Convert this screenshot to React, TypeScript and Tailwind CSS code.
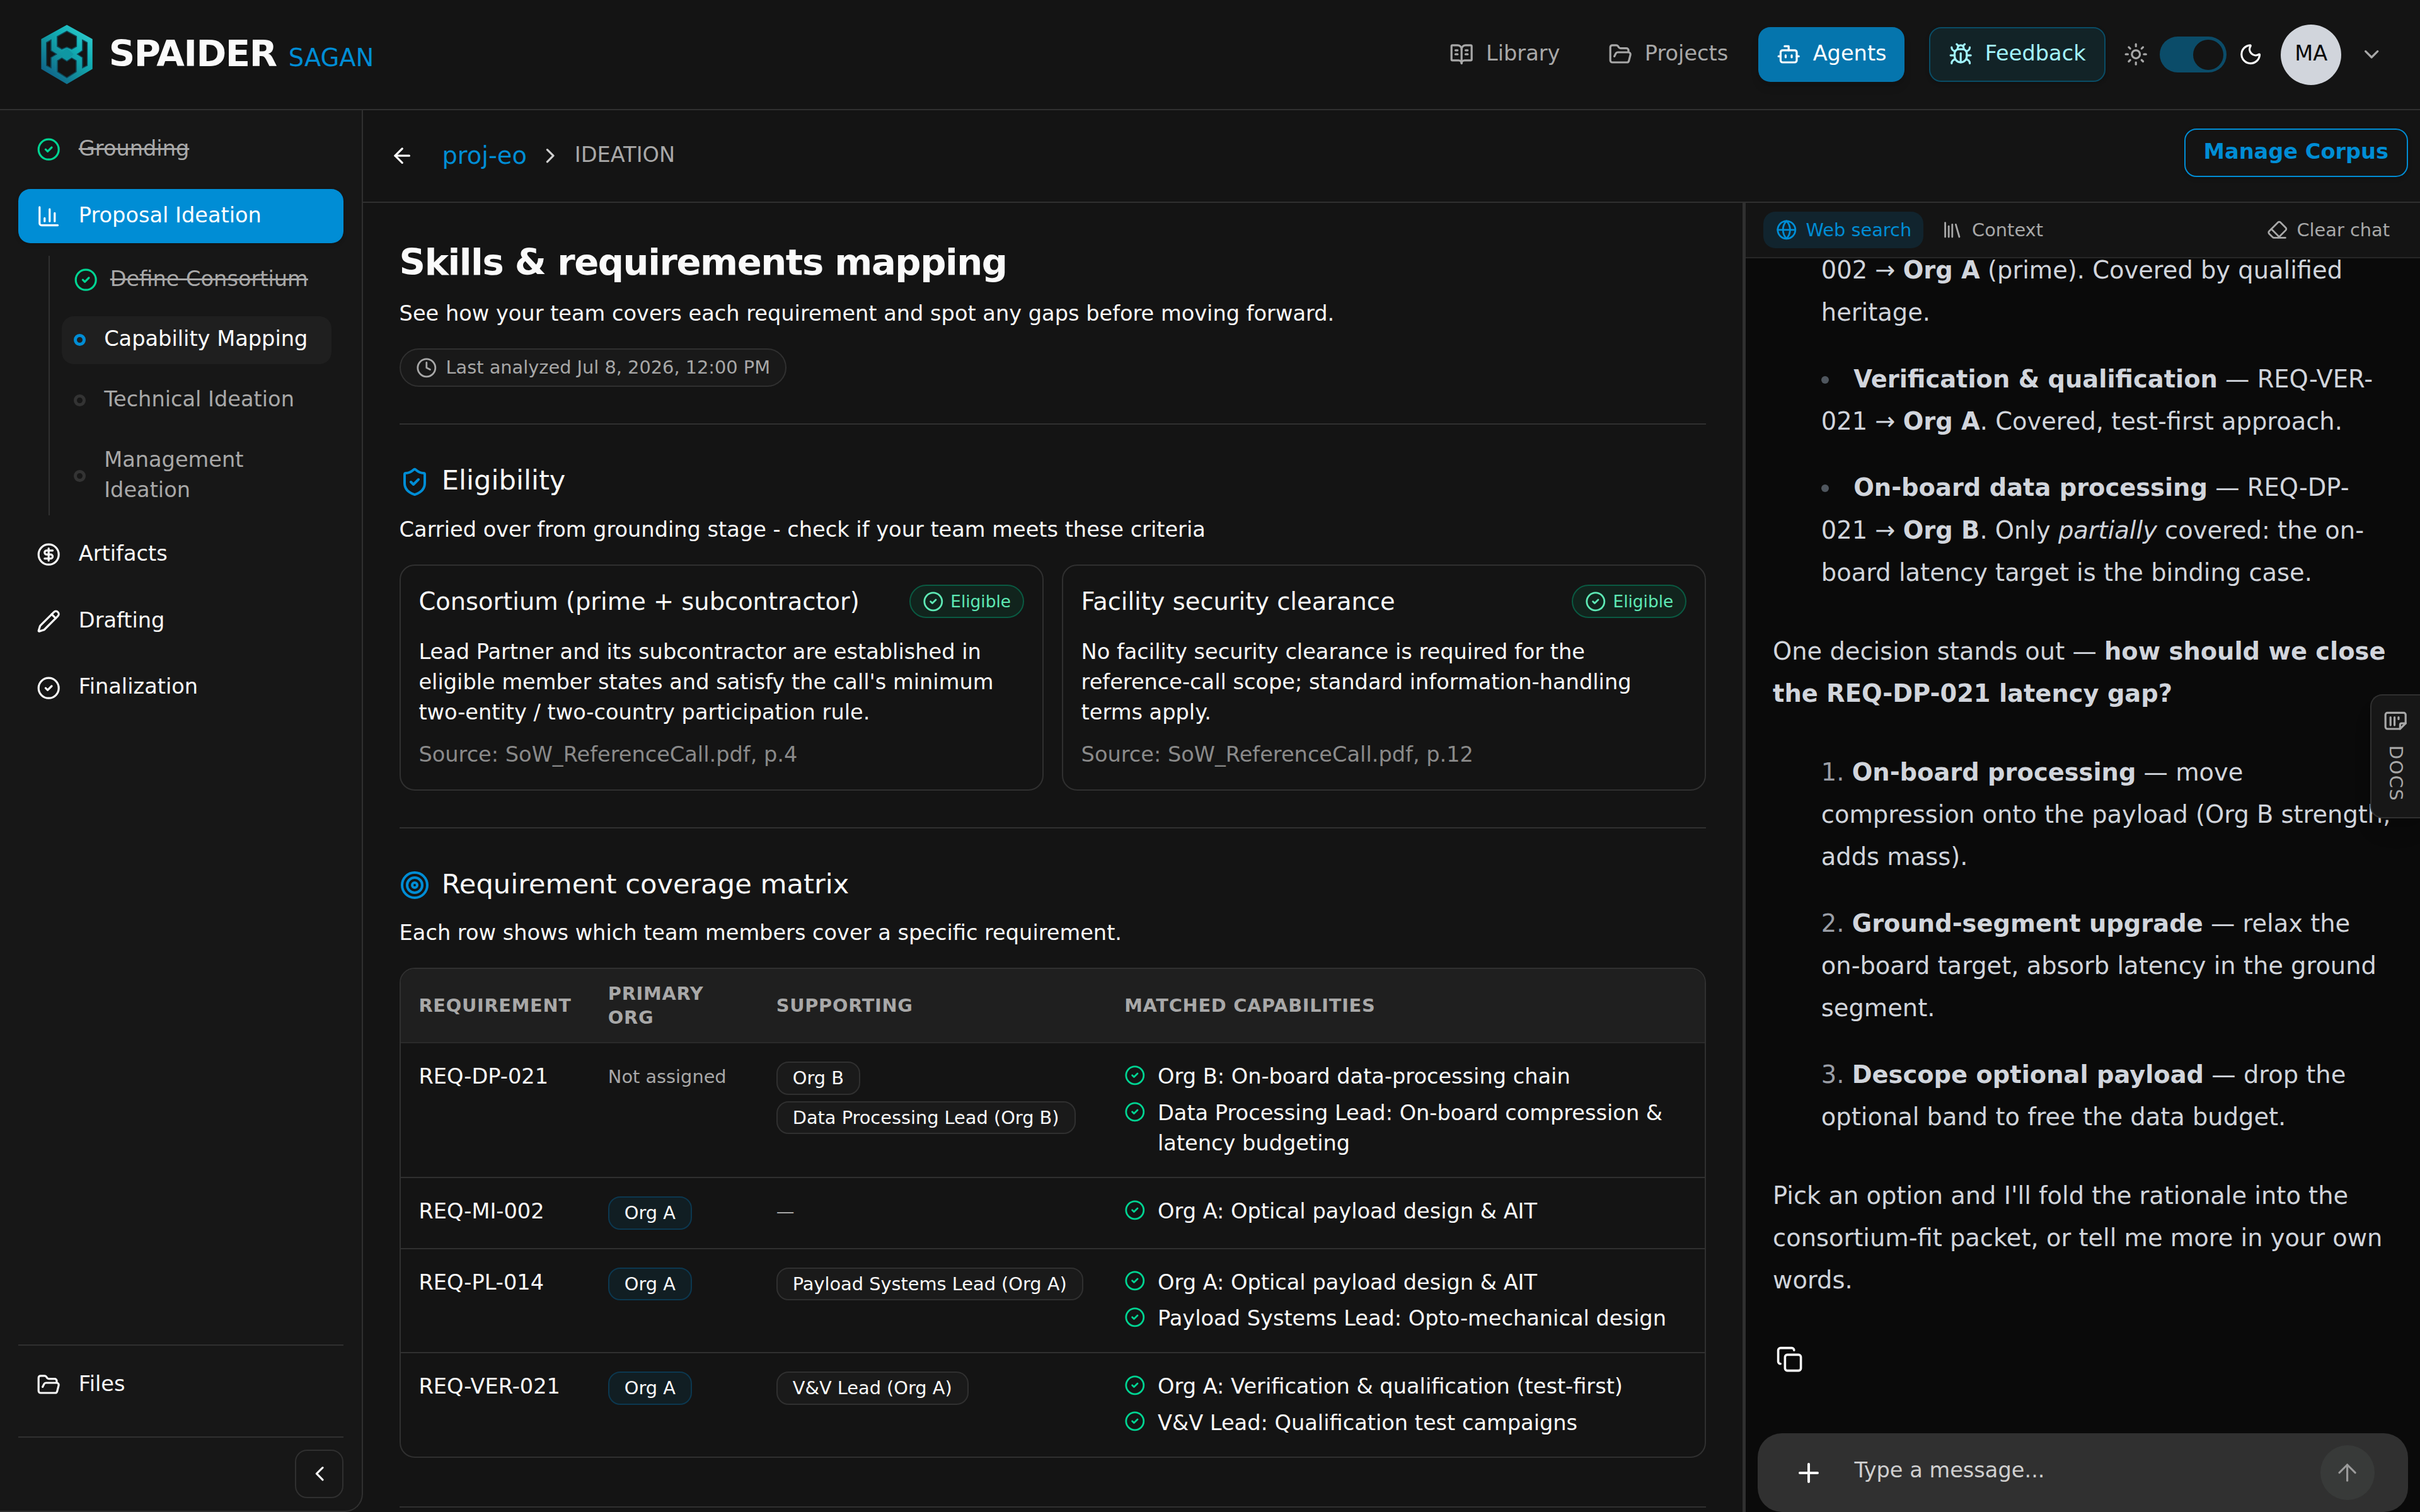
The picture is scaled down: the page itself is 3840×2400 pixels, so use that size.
import type { ReactNode } from 'react';
import {
  ArrowLeft,
  ArrowUp,
  BookOpenText,
  Bot,
  Bug,
  ChartColumn,
  ChevronDown,
  ChevronLeft,
  ChevronRight,
  CircleCheck,
  CircleDollarSign,
  Clock,
  Copy,
  Eraser,
  FolderOpen,
  Globe,
  Library,
  Moon,
  Pencil,
  Plus,
  ShieldCheck,
  Sun,
  Target,
} from 'lucide-react';

function Logo() {
  return (
    <svg viewBox="22.8 37.2 288 288" className="h-10 w-10 shrink-0">
      <defs>
        <linearGradient id="logoFill" x1="0.85" y1="0.1" x2="0.15" y2="0.95">
          <stop offset="0" stopColor="#2cc6ca" />
          <stop offset="0.3" stopColor="#12b0b6" />
          <stop offset="0.6" stopColor="#128f9c" />
          <stop offset="1" stopColor="#0f5d86" />
        </linearGradient>
      </defs>
      <path
        fill="url(#logoFill)"
        fillRule="evenodd"
        d="M167 39 289 106V249L167 321 45 249V106Z
           M167 67 120 93V142L143 156 167 146 190 156 215 142V93Z
           M167 210 143 195 121 208V263L167 292 213 263V208L190 195Z
           M68 122 93 108V160L120 178 93 195V246L68 233Z
           M266 122 240 108V160L215 178 240 195V246L266 233Z"
      />
      <path
        fill="none"
        stroke="#0d4a5c"
        strokeWidth="4"
        d="M167 69 122 94V141L143 154 167 144 190 154 213 141V94Z
           M167 212 143 197 123 209V262L167 290 211 262V209L190 197Z
           M70 123 91 111V161L118 178 91 194V243L70 232Z
           M264 123 242 111V161L217 178 242 194V243L264 232Z"
      />
      <path fill="#0f97a3" d="M167 148 199 178 167 209 135 178Z" />
    </svg>
  );
}

function Label({ children, className = '' }: { children: ReactNode; className?: string }) {
  return <span className={`pb-[1.2px] ${className}`}>{children}</span>;
}

function Header() {
  return (
    <header className="flex h-[73px] shrink-0 items-center justify-between border-b border-[#303030] px-6">
      <div className="flex items-center gap-2">
        <Logo />
        <div className="flex items-baseline gap-2">
          <span className="text-2xl font-bold tracking-tight text-[#fafafa]">SPAIDER</span>
          <span className="text-base text-[#008dd5]">SAGAN</span>
        </div>
      </div>
      <div className="flex items-center gap-3 text-sm">
        <nav className="mr-1 flex items-center gap-2">
          <a className="flex h-9 items-center gap-2 px-3 text-[#a8a8a8]">
            <BookOpenText size={16} />
            <Label>Library</Label>
          </a>
          <a className="flex h-9 items-center gap-2 px-3 text-[#a8a8a8]">
            <FolderOpen size={16} />
            <Label>Projects</Label>
          </a>
          <a className="flex h-9 items-center gap-2 rounded-lg bg-[#0575ad] px-3 text-white shadow-md">
            <Bot size={16} />
            <Label>Agents</Label>
          </a>
        </nav>
        <button className="flex h-9 items-center gap-2 rounded-lg border border-[#0a4d66] bg-[#122327] px-[12.2px] text-[#a2f4fd] shadow-sm">
          <Bug size={16} />
          <Label>Feedback</Label>
        </button>
        <div className="flex items-center gap-2">
          <Sun size={16} className="text-[#a8a8a8]" />
          <div className="flex h-6 w-11 items-center justify-end rounded-full bg-[#0b4c69] p-0.5">
            <div className="h-5 w-5 rounded-full bg-[#141414]" />
          </div>
          <Moon size={16} className="text-[#fafafa]" />
        </div>
        <div className="flex h-10 w-10 items-center justify-center rounded-full bg-[#d1d5dc] text-[#0a0a0a]">
          <Label>MA</Label>
        </div>
        <ChevronDown size={16} className="text-[#a8a8a8]" />
      </div>
    </header>
  );
}

function NavItem({ icon, label, active, done }: { icon: ReactNode; label: string; active?: boolean; done?: boolean }) {
  return (
    <div
      className={`flex h-9 items-center gap-3 rounded-lg px-3 ${
        active ? 'bg-[#008dd5] text-white shadow-sm' : done ? 'text-[#a8a8a8]' : 'text-[#fafafa]'
      }`}
    >
      {icon}
      <Label className={done ? 'line-through' : ''}>{label}</Label>
    </div>
  );
}

function SubItem({ label, active }: { label: string; active?: boolean }) {
  return (
    <div
      className={`flex items-center gap-3 rounded-lg px-2 py-1.5 ${
        active ? 'bg-[#1f1f1f] text-white' : 'text-[#a8a8a8]'
      }`}
    >
      <span
        className={`h-2 w-2 shrink-0 rounded-full border-[2.2px] ${active ? 'border-[#008dd5]' : 'border-[#333333]'}`}
      />
      <span className="-mt-[0.6px] mb-[0.6px]">{label}</span>
    </div>
  );
}

function Sidebar() {
  return (
    <aside className="flex w-60 shrink-0 flex-col rounded-br-xl border-r border-b border-[#303030] bg-[#171717] text-sm">
      <nav className="flex flex-1 flex-col gap-2 px-3 pt-2">
        <NavItem done icon={<CircleCheck size={16} className="text-[#00d492]" />} label="Grounding" />
        <NavItem active icon={<ChartColumn size={16} />} label="Proposal Ideation" />
        <div className="mr-2 ml-5 flex flex-col gap-2 border-l border-[#303030] pl-2">
          <div className="flex h-8 items-center gap-2 px-2 text-[#a8a8a8]">
            <CircleCheck size={16} className="shrink-0 text-[#00d492]" />
            <Label className="whitespace-nowrap line-through">Define Consortium</Label>
          </div>
          <SubItem active label="Capability Mapping" />
          <SubItem label="Technical Ideation" />
          <SubItem label="Management Ideation" />
        </div>
        <NavItem icon={<CircleDollarSign size={16} />} label="Artifacts" />
        <NavItem icon={<Pencil size={16} />} label="Drafting" />
        <NavItem icon={<CircleCheck size={16} />} label="Finalization" />
      </nav>
      <div className="px-3 pb-[8.4px]">
        <div className="border-y border-[#303030] pt-2 pb-4">
          <NavItem icon={<FolderOpen size={16} />} label="Files" />
        </div>
        <div className="flex justify-end pt-2">
          <button className="flex h-8 w-8 items-center justify-center rounded-lg border border-[#303030] text-[#fafafa]">
            <ChevronLeft size={16} />
          </button>
        </div>
      </div>
    </aside>
  );
}

function SectionIntro({ icon, title, text }: { icon: ReactNode; title: string; text: string }) {
  return (
    <div className="mb-[11.4px]">
      <div className="mb-[8.9px] flex h-[25.2px] items-center gap-2">
        {icon}
        <h2 className="text-lg leading-[1.4]">{title}</h2>
      </div>
      <p className="text-sm leading-relaxed">{text}</p>
    </div>
  );
}

function EligibilityCard({ title, text, source }: { title: string; text: string; source: string }) {
  return (
    <div className="rounded-[10px] border border-[#303030] px-3 pt-3 pb-[13px] text-sm">
      <div className="mb-3 flex h-[23.2px] items-start justify-between">
        <h3 className="pt-[0.5px] text-base leading-[1.4]">{title}</h3>
        <span className="mt-[0.8px] flex h-[22px] items-center gap-[4.5px] rounded-full border border-[#0a5a42] bg-[#11241d] px-2 text-[11px] leading-4 text-[#5ee9b5]">
          <CircleCheck size={14} />
          Eligible
        </span>
      </div>
      <p>{text}</p>
      <p className="mt-2 text-[#8a8a8a]">{source}</p>
    </div>
  );
}

function Chip({ label, primary }: { label: string; primary?: boolean }) {
  return (
    <span
      className={`flex h-[22px] items-center rounded-lg border px-2.5 text-xs whitespace-nowrap ${
        primary ? 'border-[#0c3850] bg-[#111e23]' : 'border-[#303030] bg-[#1a1a1a]'
      }`}
    >
      {label}
    </span>
  );
}

const rows = [
  {
    id: 'REQ-DP-021',
    primary: '',
    supporting: ['Org B', 'Data Processing Lead (Org B)'],
    matched: ['Org B: On-board data-processing chain', 'Data Processing Lead: On-board compression & latency budgeting'],
  },
  { id: 'REQ-MI-002', primary: 'Org A', supporting: [], matched: ['Org A: Optical payload design & AIT'] },
  {
    id: 'REQ-PL-014',
    primary: 'Org A',
    supporting: ['Payload Systems Lead (Org A)'],
    matched: ['Org A: Optical payload design & AIT', 'Payload Systems Lead: Opto-mechanical design'],
  },
  {
    id: 'REQ-VER-021',
    primary: 'Org A',
    supporting: ['V&V Lead (Org A)'],
    matched: ['Org A: Verification & qualification (test-first)', 'V&V Lead: Qualification test campaigns'],
  },
];

function CoverageMatrix() {
  return (
    <div className="overflow-hidden rounded-[10px] border border-[#303030] text-sm">
      <div className="grid h-[49.2px] grid-cols-[125.2px_111.2px_230.2px_1fr] items-center border-b border-[#2a2a2a] bg-[#1f1f1f] text-xs font-bold tracking-wide text-[#a8a8a8] uppercase">
        <div className="px-3">Requirement</div>
        <div className="px-3">Primary Org</div>
        <div className="px-3">Supporting</div>
        <div className="px-3">Matched capabilities</div>
      </div>
      {rows.map((row) => (
        <div
          key={row.id}
          className="grid grid-cols-[125.2px_111.2px_230.2px_1fr] items-start border-b border-[#303030] pb-[0.17px] last:border-b-0"
        >
          <div className="px-3 py-3">{row.id}</div>
          <div className="flex px-3 py-3">
            {row.primary ? (
              <Chip primary label={row.primary} />
            ) : (
              <span className="text-xs leading-5 text-[#a8a8a8]">Not assigned</span>
            )}
          </div>
          <div className="flex flex-wrap gap-1 px-3 py-3">
            {row.supporting.length === 0 && <span className="text-xs leading-5 text-[#a8a8a8]">—</span>}
            {row.supporting.map((name) => (
              <Chip key={name} label={name} />
            ))}
          </div>
          <div className="flex flex-col gap-1 px-3 py-3">
            {row.matched.map((text) => (
              <div key={text} className="flex items-start gap-2">
                <CircleCheck size={14} className="mt-0.5 shrink-0 text-[#00d492]" />
                <span>{text}</span>
              </div>
            ))}
          </div>
        </div>
      ))}
    </div>
  );
}

function MainPanel() {
  return (
    <main className="w-[912px] overflow-hidden px-6 pt-6 text-[#fafafa]">
      <h1 className="text-2xl font-bold tracking-tight">Skills &amp; requirements mapping</h1>
      <p className="mt-[6.4px] text-sm leading-relaxed">
        See how your team covers each requirement and spot any gaps before moving forward.
      </p>
      <div className="mt-[11.2px] mb-6 flex">
        <span className="flex items-center gap-1.5 rounded-full border border-[#303030] bg-[#191919] px-2.5 py-1 text-xs text-[#a8a8a8]">
          <Clock size={14} />
          Last analyzed Jul 8, 2026, 12:00 PM
        </span>
      </div>
      <section className="border-t border-[#303030] pt-[24.2px] pb-6">
        <SectionIntro
          icon={<ShieldCheck size={20} className="mt-0.5 text-[#008dd5]" />}
          title="Eligibility"
          text="Carried over from grounding stage - check if your team meets these criteria"
        />
        <div className="grid grid-cols-2 gap-3">
          <EligibilityCard
            title="Consortium (prime + subcontractor)"
            text="Lead Partner and its subcontractor are established in eligible member states and satisfy the call's minimum two-entity / two-country participation rule."
            source="Source: SoW_ReferenceCall.pdf, p.4"
          />
          <EligibilityCard
            title="Facility security clearance"
            text="No facility security clearance is required for the reference-call scope; standard information-handling terms apply."
            source="Source: SoW_ReferenceCall.pdf, p.12"
          />
        </div>
      </section>
      <section className="border-t border-[#303030] pt-6">
        <SectionIntro
          icon={<Target size={20} className="mt-0.5 text-[#008dd5]" />}
          title="Requirement coverage matrix"
          text="Each row shows which team members cover a specific requirement."
        />
        <CoverageMatrix />
      </section>
      <div className="mt-8 border-t border-[#303030]" />
    </main>
  );
}

function ChatPanel() {
  return (
    <section className="flex min-w-0 flex-1 flex-col bg-[#0a0a0a]">
      <div className="flex h-[37px] shrink-0 items-center justify-between border-b border-[#262626] bg-[#141414] px-3 text-xs text-[#a8a8a8]">
        <div className="flex gap-1">
          <span className="flex h-6 items-center gap-1.5 rounded-lg bg-[#11242e] px-2 text-[#008dd5]">
            <Globe size={14} />
            Web search
          </span>
          <span className="flex h-6 items-center gap-1.5 px-2">
            <Library size={14} />
            Context
          </span>
        </div>
        <span className="flex h-6 items-center gap-1.5 px-2">
          <Eraser size={14} />
          Clear chat
        </span>
      </div>
      <div className="flex min-h-0 flex-1 flex-col justify-end overflow-hidden pr-[18px] pl-[18.1px] text-base leading-7 text-[#d1d5dc]">
        <ul className="list-inside list-disc space-y-4 pl-8 marker:text-[#4f565e]">
          <li className="list-none">
            002 → <b>Org A</b> (prime). Covered by qualified heritage.
          </li>
          <li>
            <b>Verification &amp; qualification</b> — REQ-VER-021 → <b>Org A</b>. Covered, test-first approach.
          </li>
          <li>
            <b>On-board data processing</b> — REQ-DP-021 → <b>Org B</b>. Only <i>partially</i> covered: the on-board
            latency target is the binding case.
          </li>
        </ul>
        <p className="mt-6">
          One decision stands out — <b>how should we close the REQ-DP-021 latency gap?</b>
        </p>
        <ol className="mt-6 list-inside list-decimal space-y-4 pl-8 marker:text-[#9a9ea6]">
          <li>
            <b>On-board processing</b> — move compression onto the payload (Org B strength, adds mass).
          </li>
          <li>
            <b>Ground-segment upgrade</b> — relax the on-board target, absorb latency in the ground segment.
          </li>
          <li>
            <b>Descope optional payload</b> — drop the optional band to free the data budget.
          </li>
        </ol>
        <p className="mt-6">
          Pick an option and I'll fold the rationale into the consortium-fit packet, or tell me more in your own words.
        </p>
        <div className="mt-[29.5px] mb-10 pl-[1.9px] text-[#fafafa]">
          <Copy size={18} />
        </div>
      </div>
      <div className="mx-2 flex h-[52px] shrink-0 items-center rounded-2xl bg-[#303030] pr-[22px] pl-6 text-sm text-[#cfcfcf]">
        <Plus size={20} className="text-[#fafafa]" />
        <span className="ml-5 flex-1 pb-[3px]">Type a message...</span>
        <button className="flex h-9 w-9 items-center justify-center rounded-full bg-[#383a39] text-[#9b9b9b]">
          <ArrowUp size={18} strokeWidth={1.75} />
        </button>
      </div>
    </section>
  );
}

function DocsTab() {
  return (
    <div className="absolute top-[459px] right-0 flex w-[33px] flex-col items-center gap-2 rounded-l-lg border border-r-0 border-[#303030] bg-[#171717] pt-[9px] pb-[10.5px] text-[#a8a8a8] shadow-lg">
      <svg
        viewBox="0 0 24 24"
        className="h-4 w-4"
        fill="none"
        stroke="currentColor"
        strokeWidth="2"
        strokeLinecap="round"
        strokeLinejoin="round"
      >
        <path d="M22 14.5V6a2 2 0 0 0-2-2H4a2 2 0 0 0-2 2v12a2 2 0 0 0 2 2h12.5Z" />
        <path d="M16.5 20v-4a1.5 1.5 0 0 1 1.5-1.5h4" />
        <path d="M7 8.5v7.8M11 8.5v7.8M15 8.5v1.8" />
      </svg>
      <span className="text-xs tracking-wider [writing-mode:vertical-rl]">DOCS</span>
    </div>
  );
}

export default function App() {
  return (
    <div className="relative flex h-[1000px] w-[1600px] flex-col overflow-hidden bg-[#141414] font-['DejaVu_Sans',sans-serif] [zoom:2.4]">
      <Header />
      <div className="flex min-h-0 flex-1">
        <Sidebar />
        <div className="flex min-w-0 flex-1 flex-col">
          <div className="flex h-[61px] shrink-0 items-start justify-between border-b border-[#303030] pt-3 pr-2 pl-[18px]">
            <div className="flex h-9 items-center">
              <ArrowLeft size={16} className="text-[#fafafa]" />
              <span className="ml-[18.3px] text-base text-[#008dd5]">proj-eo</span>
              <ChevronRight size={16} className="ml-[7.6px] text-[#d0d0d0]" />
              <Label className="ml-2 text-sm text-[#a8a8a8]">IDEATION</Label>
            </div>
            <button className="h-8 rounded-lg border border-[#008dd5] px-3 pb-[1.5px] text-sm font-bold text-[#008dd5] shadow-sm">
              Manage Corpus
            </button>
          </div>
          <div className="flex min-h-0 flex-1">
            <MainPanel />
            <div className="w-0.5 shrink-0 bg-[#303030]" />
            <ChatPanel />
          </div>
        </div>
      </div>
      <DocsTab />
    </div>
  );
}
